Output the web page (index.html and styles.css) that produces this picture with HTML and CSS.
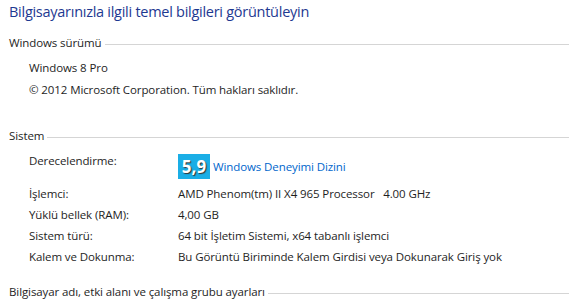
FILE: index.html
```html
<!DOCTYPE html>
<html lang="tr">
<head>
    <meta charset="UTF-8">
    <meta name="viewport" content="width=device-width, initial-scale=1.0">
    <title>Sistem</title>
    <link rel="stylesheet" href="styles.css">
</head>
<body>
    <h1 class="title">Bilgisayarınızla ilgili temel bilgileri görüntüleyin</h1>

    <section class="group">
        <h2 class="group-head"><span>Windows sürümü</span></h2>
        <div class="edition">
            <p>Windows 8 Pro</p>
            <p>© 2012 Microsoft Corporation. Tüm hakları saklıdır.</p>
        </div>
    </section>

    <section class="group system">
        <h2 class="group-head"><span>Sistem</span></h2>
        <dl class="props">
            <dt class="first">Derecelendirme:</dt>
            <dd class="rating">
                <span class="score">5,9</span>
                <a href="#">Windows Deneyimi Dizini</a>
            </dd>

            <dt>İşlemci:</dt>
            <dd class="pre">AMD Phenom(tm) II X4 965 Processor   4.00 GHz</dd>

            <dt>Yüklü bellek (RAM):</dt>
            <dd>4,00 GB</dd>

            <dt>Sistem türü:</dt>
            <dd>64 bit İşletim Sistemi, x64 tabanlı işlemci</dd>

            <dt>Kalem ve Dokunma:</dt>
            <dd>Bu Görüntü Biriminde Kalem Girdisi veya Dokunarak Giriş yok</dd>
        </dl>
    </section>

    <section class="group computer">
        <h2 class="group-head"><span>Bilgisayar adı, etki alanı ve çalışma grubu ayarları</span></h2>
    </section>
</body>
</html>
```

FILE: styles.css
```css
body {
    margin: 0;
    padding: 0 0 0 9px;
    font-family: 'Open Sans', 'Noto Sans', sans-serif;
    font-size: 11.5px;
    letter-spacing: -0.1px;
    line-height: 22px;
    color: #1e1e1e;
    background: #fff;
    overflow: hidden;
}

.title {
    margin: 1px 0 0 0;
    font-size: 14.5px;
    font-weight: normal;
    letter-spacing: -0.27px;
    line-height: 22px;
    color: #1e3991;
}

.group {
    margin-top: 9px;
}

.group-head {
    display: flex;
    align-items: center;
    margin: 0;
    font-size: 11.5px;
    font-weight: normal;
    line-height: 22px;
}

.group-head::after {
    content: "";
    flex: 1;
    height: 1px;
    margin: 2px 0 0 3px;
    background: #d5d5d5;
}

.edition {
    padding: 3px 0 0 20px;
}

.edition p {
    margin: 0;
}

.system {
    margin-top: 24px;
}

.props {
    display: grid;
    grid-template-columns: 149px 1fr;
    margin: 3px 0 0 0;
    padding-left: 20px;
    line-height: 21px;
}

.props dt,
.props dd {
    margin: 0;
}

.props .first {
    align-self: start;
}

.rating {
    display: flex;
    align-items: center;
    gap: 3px;
    padding: 4px 0 4px 0;
    line-height: 21px;
}

.score {
    display: inline-block;
    width: 32px;
    height: 25px;
    line-height: 25px;
    text-align: center;
    background: #1aaee6;
    color: #fff;
    font-weight: bold;
    font-size: 17px;
    letter-spacing: 0;
    text-shadow: 1px 1px 1px #333;
}

.rating a {
    color: #0066cc;
    text-decoration: none;
}

.pre {
    white-space: pre;
}

.computer {
    margin-top: 14px;
}
```
